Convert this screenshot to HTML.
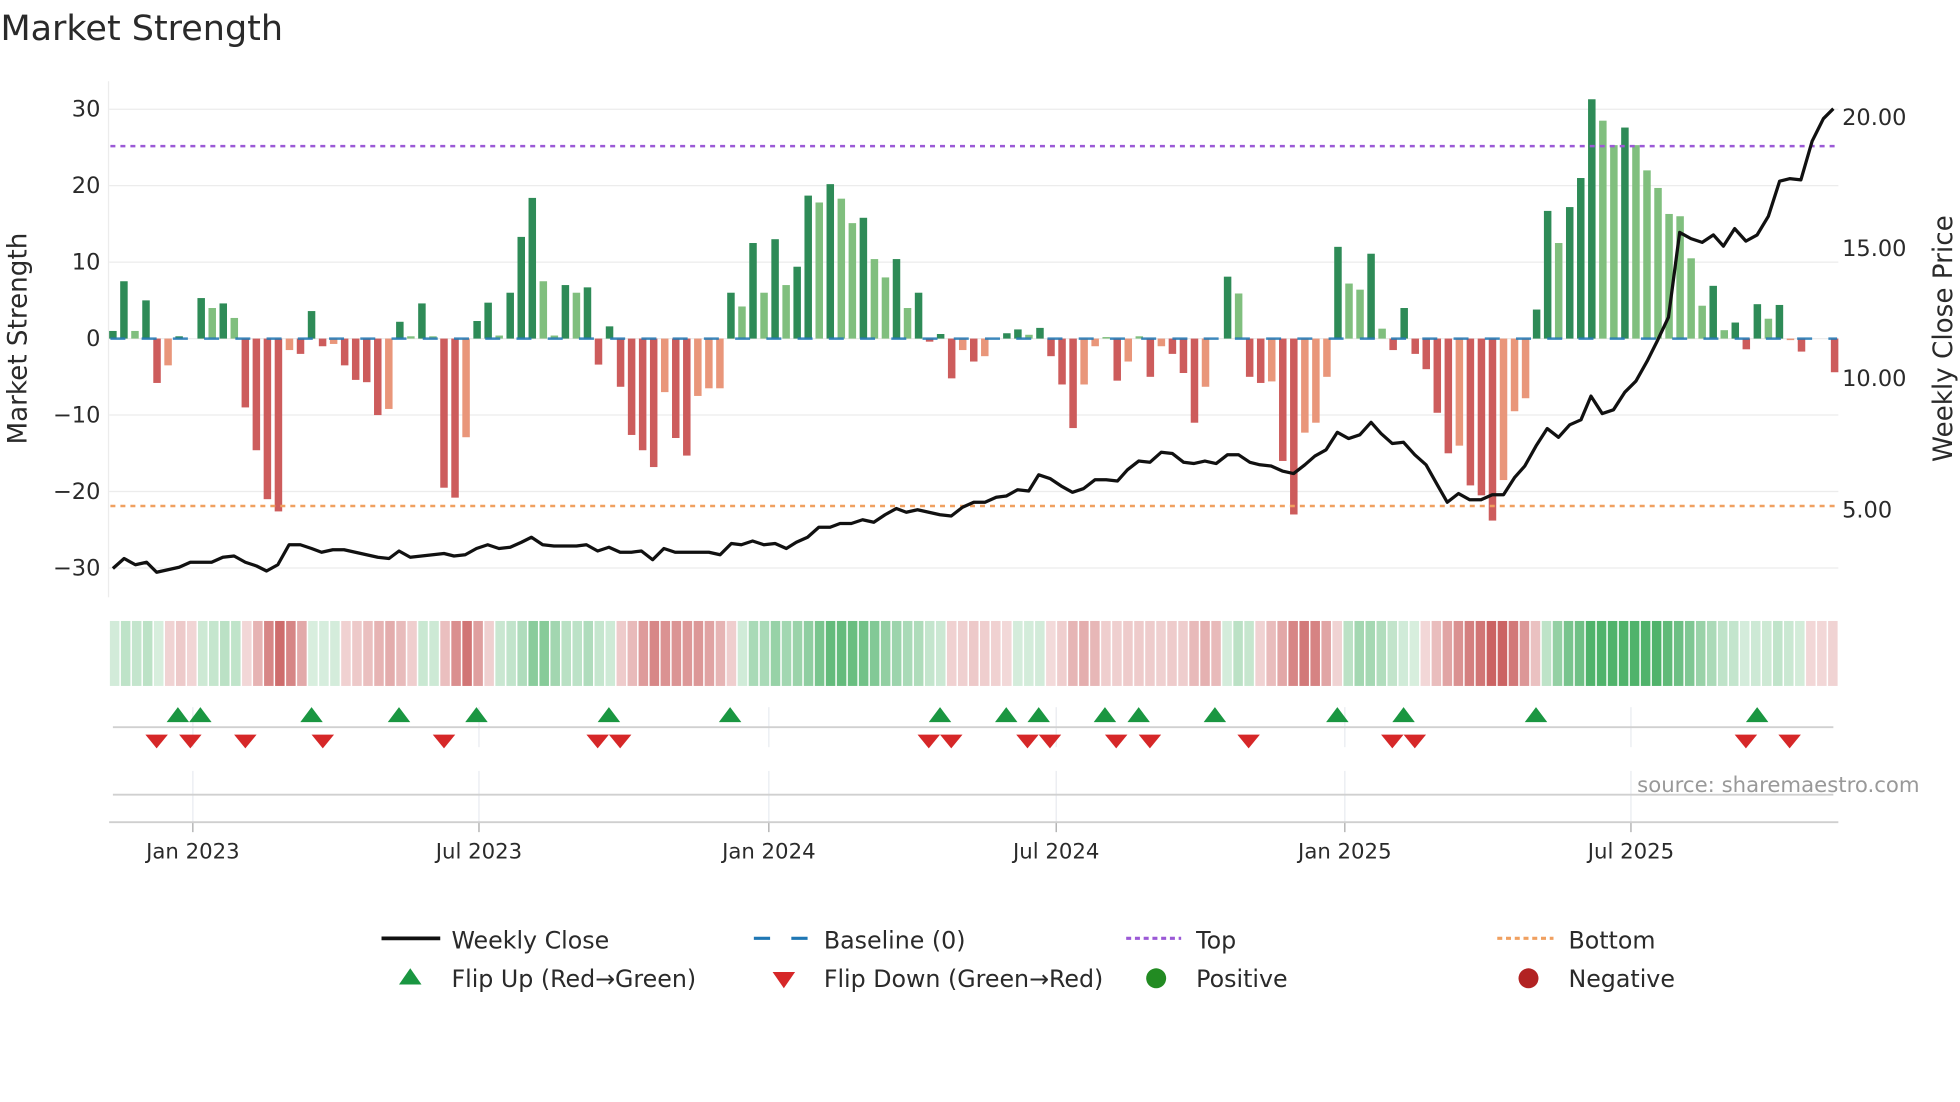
<!DOCTYPE html>
<html><head><meta charset="utf-8">
<style>
html,body{margin:0;padding:0;background:#fff;width:1960px;height:1102px;overflow:hidden}
svg{display:block}
text{font-family:"DejaVu Sans","Liberation Sans",sans-serif;fill:#2a2a2a}
</style></head>
<body>
<svg id="s" width="1960" height="1102" viewBox="0 0 1568 882" xmlns="http://www.w3.org/2000/svg">
<rect width="1568" height="882" fill="#fff"/>
<text x="0" y="32" font-size="28" fill="#333">Market Strength</text>
<g id="grid" stroke="#ececec" stroke-width="1"></g>
<line x1="86.5" y1="65" x2="86.5" y2="478" stroke="#ececec"/>
<g id="bars"></g>
<line x1="88" y1="271" x2="1470" y2="271" stroke="#1f77b4" stroke-width="2" stroke-dasharray="12,13" opacity="0.85"/>
<line x1="88" y1="117" x2="1470" y2="117" stroke="#9b59d6" stroke-width="2" stroke-dasharray="4,4"/>
<line x1="88" y1="405" x2="1470" y2="405" stroke="#f0a060" stroke-width="2" stroke-dasharray="4,4"/>
<polyline id="price" fill="none" stroke="#111" stroke-width="2.6" stroke-linejoin="round"/>
<g font-size="18" text-anchor="end" id="ly"></g>
<g font-size="18" id="ry"></g>
<text transform="translate(21,271) rotate(-90)" font-size="21" text-anchor="middle">Market Strength</text>
<text transform="translate(1562,271) rotate(-90)" font-size="21" text-anchor="middle">Weekly Close Price</text>
<g id="heat"></g>
<g id="vg" stroke="#e8ebf0" stroke-width="1"></g>
<line x1="90" y1="582" x2="1467" y2="582" stroke="#d0d0d0" stroke-width="1.5"/>
<line x1="90" y1="636" x2="1467" y2="636" stroke="#d0d0d0" stroke-width="1.5"/>
<line x1="87" y1="658" x2="1471" y2="658" stroke="#cfcfcf" stroke-width="1.5"/>
<g id="mk"></g>
<g id="xt" font-size="17" text-anchor="middle"></g>
<text x="1536" y="634" font-size="17" text-anchor="end" style="fill:#999">source: sharemaestro.com</text>
<g font-size="19">
<line x1="305" y1="751" x2="352" y2="751" stroke="#111" stroke-width="3"/>
<text x="361" y="759">Weekly Close</text>
<line x1="603" y1="751" x2="647" y2="751" stroke="#1f77b4" stroke-width="2.5" stroke-dasharray="13,17"/>
<text x="659" y="759">Baseline (0)</text>
<line x1="901" y1="751" x2="945" y2="751" stroke="#9b59d6" stroke-width="2.5" stroke-dasharray="4,3"/>
<text x="957" y="759">Top</text>
<line x1="1198" y1="751" x2="1243" y2="751" stroke="#f0a060" stroke-width="2.5" stroke-dasharray="4,3"/>
<text x="1255" y="759">Bottom</text>
<polygon points="319,788 337,788 328,775" fill="#1a9641"/>
<text x="361" y="790">Flip Up (Red→Green)</text>
<polygon points="618,778 636,778 627,791" fill="#d62728"/>
<text x="659" y="790">Flip Down (Green→Red)</text>
<circle cx="925" cy="783" r="8" fill="#228b22"/>
<text x="957" y="790">Positive</text>
<circle cx="1223" cy="783" r="8" fill="#b22222"/>
<text x="1255" y="790">Negative</text>
</g>
</svg>
<script>
var NS="http://www.w3.org/2000/svg";
function el(p,t,a){var e=document.createElementNS(NS,t);for(var k in a)e.setAttribute(k,a[k]);p.appendChild(e);return e;}
var $=function(i){return document.getElementById(i)};
var Y0=271,K=6.12;
[30,20,10,0,-10,-20,-30].forEach(function(v){var y=Y0-v*K;el($('grid'),'line',{x1:87,y1:y,x2:1471,y2:y});
var t=el($('ly'),'text',{x:80,y:y+6});t.textContent=(v<0?'\u2212'+(-v):v);});
[[20,93],[15,198],[10,302],[5,407]].forEach(function(a){var t=el($('ry'),'text',{x:1474,y:a[1]+7});t.textContent=a[0].toFixed(2);});
var d="1D 7.5D 1L 5D -5.8R -3.5S 0.3D 0L 5.3D 4L 4.6D 2.7L -9R -14.6R -21R -22.6R -1.5S -2R 3.6D -1R -0.7S -3.5R -5.4R -5.7R -10R -9.2S 2.2D 0.3L 4.6D 0.3L -19.5R -20.8R -12.9S 2.3D 4.7D 0.4L 6D 13.3D 18.4D 7.5L 0.4L 7D 6L 6.7D -3.4R 1.6D -6.3R -12.6R -14.6R -16.8R -7S -13R -15.3R -7.5S -6.5S -6.5S 6D 4.2L 12.5D 6L 13D 7L 9.4D 18.7D 17.8L 20.2D 18.3L 15.1L 15.8D 10.4L 8L 10.4D 4L 6D -0.4R 0.6D -5.2R -1.5S -3R -2.3S 0L 0.7D 1.2D 0.5L 1.4D -2.3R -6R -11.7R -6S -1S 0.2L -5.5R -3S 0.3L -5R -1S -2R -4.5R -11R -6.3S 0L 8.1D 5.9L -5R -5.8R -5.6S -16R -23R -12.3S -11S -5S 12D 7.2L 6.4L 11.1D 1.3L -1.5R 4D -2R -4R -9.7R -15R -14S -19.2R -20.5R -23.8R -18.5S -9.5S -7.8S 3.8D 16.7D 12.5L 17.2D 21D 31.3D 28.5L 25.3L 27.6D 25.3L 22L 19.7L 16.3L 16L 10.5L 4.3L 6.9D 1.1L 2.1D -1.4R 4.5D 2.6L 4.4D -0.2S -1.7R 0L 0L -4.4R".split(' ');
var n=d.length,step=(1468-90)/(n-1),C={D:'#2e8b57',L:'#80bf7e',R:'#cd5c5c',S:'#e9967a'};
var vals=[];
d.forEach(function(s,i){var v=parseFloat(s),c=s.slice(-1);vals.push(v);var x=90+i*step;
var h=Math.abs(v)*K;if(h<0.5)return;el($('bars'),'rect',{x:x-3,y:v>0?Y0-h:Y0,width:6,height:h,fill:C[c]});});
var cw=(1471-87)/n;
for(var i=0;i<n;i++){var a=0,c=0;for(var j=i-2;j<=i;j++){if(j>=0){a+=vals[j];c++;}}a/=c;
var m=Math.min(Math.abs(a)/22,1),al=0.2+0.7*m;
var col=a>=0?'rgba(60,170,90,'+al+')':'rgba(195,75,75,'+al+')';
el($('heat'),'rect',{x:87+i*cw+0.6,y:497,width:cw-1.2,height:52,fill:col});}
[[154,'Jan 2023'],[383,'Jul 2023'],[615,'Jan 2024'],[845,'Jul 2024'],[1076,'Jan 2025'],[1305,'Jul 2025']].forEach(function(a){
el($('vg'),'line',{x1:a[0],y1:566,x2:a[0],y2:598});el($('vg'),'line',{x1:a[0],y1:617,x2:a[0],y2:666});
el($('vg'),'line',{x1:a[0],y1:658,x2:a[0],y2:666,stroke:'#aaa'});
var t=el($('xt'),'text',{x:a[0],y:687});t.textContent=a[1];});
[142,160,249,319,381,487,584,752,805,831,884,911,972,1070,1123,1229,1406].forEach(function(x){
el($('mk'),'polygon',{points:(x-9)+',578 '+(x+9)+',578 '+x+',566',fill:'#1a9641'});});
[125,152,196,258,355,478,496,743,761,822,840,893,920,999,1114,1132,1397,1432].forEach(function(x){
el($('mk'),'polygon',{points:(x-9)+',588 '+(x+9)+',588 '+x+',599',fill:'#d62728'});});
var p="90,455 99,447 108,452 117,450 125,458 134,456 143,454 152,450 160,450 169,450 178,446 187,445 196,450 205,453 213,457 222,452 231,436 240,436 249,439 257,442 266,440 275,440 284,442 293,444 302,446 311,447 319,441 328,446 337,445 346,444 355,443 363,445 372,444 381,439 390,436 399,439 408,438 417,434 425,430 434,436 443,437 452,437 461,437 469,436 478,441 487,438 496,442 505,442 513,441 522,448 531,439 540,442 549,442 558,442 567,442 576,444 585,435 593,436 602,433 611,436 620,435 629,439 637,434 646,430 655,422 664,422 672,419 681,419 690,416 699,418 708,412 717,407 725,410 734,408 743,410 752,412 761,413 770,406 779,402 788,402 797,398 805,397 814,392 823,393 831,380 840,383 849,389 858,394 867,391 876,384 885,384 894,385 902,376 911,369 920,370 929,362 938,363 947,370 955,371 964,369 973,371 982,364 991,364 1000,370 1008,372 1017,373 1026,377 1035,379 1044,372 1052,365 1061,360 1070,346 1079,351 1088,348 1097,338 1105,347 1114,355 1123,354 1132,364 1141,372 1150,388 1158,402 1167,395 1176,400 1185,400 1194,396 1203,396 1212,382 1220,373 1229,357 1238,343 1247,350 1256,340 1265,336 1273,317 1282,331 1291,328 1300,314 1309,305 1318,289 1326,273 1335,254 1344,186 1353,191 1362,194 1371,188 1379,197 1388,183 1397,193 1406,188 1415,173 1424,145 1432,143 1441,144 1450,113 1459,95 1467,87";
$('price').setAttribute('points',p);
</script>
</body></html>
